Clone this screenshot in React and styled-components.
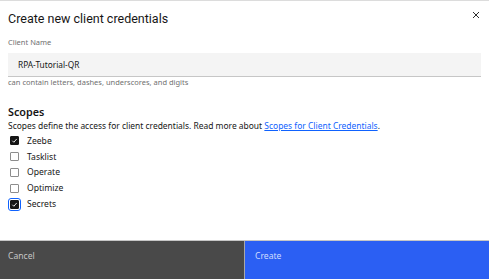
import React from "react";
import styled, { createGlobalStyle } from "styled-components";

const GlobalStyle = createGlobalStyle`
    html, body {
        margin: 0;
        padding: 0;
        background: #ffffff;
    }
    body {
        font-family: "Noto Sans", "Open Sans", sans-serif;
        color: #161616;
    }
`;

const Modal = styled.div`
    width: 489px;
    height: 279px;
    box-sizing: border-box;
    border-top: 1px solid #dcdcdc;
    display: flex;
    flex-direction: column;
    background: #ffffff;
`;

const Body = styled.div`
    flex: 1;
    padding: 0 8px 0 8px;
    display: flex;
    flex-direction: column;
`;

const Header = styled.div`
    display: flex;
    justify-content: space-between;
    align-items: flex-start;
    padding-top: 9px;
`;

const Title = styled.h2`
    margin: 0;
    font-family: Roboto, "Noto Sans", sans-serif;
    font-size: 12.5px;
    font-weight: 400;
    line-height: 18px;
    color: #161616;
`;

const Close = styled.button`
    border: none;
    background: none;
    padding: 0;
    margin: 0;
    width: 10px;
    height: 10px;
    display: flex;
    align-items: center;
    justify-content: center;
    cursor: pointer;
`;

const Label = styled.label`
    display: block;
    margin-top: 9px;
    font-size: 7.5px;
    line-height: 10px;
    color: #6f6f6f;
`;

const Input = styled.div`
    margin-top: 6px;
    height: 23px;
    background: #f4f4f4;
    border-bottom: 1px solid #c6c6c6;
    display: flex;
    align-items: center;
    padding-left: 10px;
    font-size: 8.3px;
    color: #161616;
`;

const Helper = styled.div`
    margin-top: 0;
    font-size: 7.5px;
    line-height: 10px;
    color: #6f6f6f;
`;

const SectionTitle = styled.h3`
    margin: 18px 0 0 0;
    font-size: 10.8px;
    font-weight: 600;
    line-height: 13px;
    color: #161616;
`;

const Description = styled.p`
    margin: 2px 0 0 0;
    font-size: 8.45px;
    line-height: 12px;
    color: #161616;

    a {
        color: #0f62fe;
        text-decoration: underline;
    }
`;

const List = styled.div`
    display: flex;
    flex-direction: column;
    margin-top: 1px;
`;

const Row = styled.label`
    display: flex;
    align-items: center;
    height: 15.8px;
    gap: 8px;
    padding-left: 2px;
    font-size: 8.6px;
    color: #161616;
`;

const Box = styled.span`
    width: 9px;
    height: 9px;
    box-sizing: border-box;
    border-radius: 1px;
    display: flex;
    align-items: center;
    justify-content: center;
    background: ${(p) => (p.checked ? "#161616" : "#ffffff")};
    border: 1px solid ${(p) => (p.checked ? "#161616" : "#8d8d8d")};
    outline: ${(p) => (p.focused ? "1.2px solid #0f62fe" : "none")};
    outline-offset: 1px;
`;

const Footer = styled.div`
    display: grid;
    grid-template-columns: 244px 1fr;
    height: 38px;
    border-top: 1px solid #c6c6c6;
`;

const FooterButton = styled.button`
    border: none;
    margin: 0;
    text-align: left;
    align-self: stretch;
    display: flex;
    align-items: flex-start;
    padding: 9px 0 0 8px;
    font-family: inherit;
    font-size: 8.6px;
    color: ${(p) => (p.primary ? "#d0dcff" : "#c6c6c6")};
    background: ${(p) => (p.primary ? "#2b5ff3" : "#494949")};
    border-left: ${(p) => (p.primary ? "1px solid #a8a8a8" : "none")};
    padding-left: ${(p) => (p.primary ? "10px" : "8px")};
`;

const scopes = [
    { name: "Zeebe", checked: true },
    { name: "Tasklist", checked: false },
    { name: "Operate", checked: false },
    { name: "Optimize", checked: false },
    { name: "Secrets", checked: true, focused: true },
];

const Check = () => (
    <svg width="7" height="7" viewBox="0 0 16 16">
        <path d="M3 8.5 L6.5 12 L13 4.5" fill="none" stroke="#ffffff" strokeWidth="2" />
    </svg>
);

export default function App() {
    return (
        <>
            <GlobalStyle />
            <Modal>
                <Body>
                    <Header>
                        <Title>Create new client credentials</Title>
                        <Close aria-label="close">
                            <svg width="8" height="8" viewBox="0 0 16 16">
                                <path d="M2 2 L14 14 M14 2 L2 14" stroke="#161616" strokeWidth="1.8" />
                            </svg>
                        </Close>
                    </Header>
                    <Label>Client Name</Label>
                    <Input>RPA-Tutorial-QR</Input>
                    <Helper>can contain letters, dashes, underscores, and digits</Helper>
                    <SectionTitle>Scopes</SectionTitle>
                    <Description>
                        Scopes define the access for client credentials. Read more about{" "}
                        <a href="#">Scopes for Client Credentials</a>.
                    </Description>
                    <List>
                        {scopes.map((scope) => (
                            <Row key={scope.name}>
                                <Box checked={scope.checked} focused={scope.focused}>
                                    {scope.checked && <Check />}
                                </Box>
                                {scope.name}
                            </Row>
                        ))}
                    </List>
                </Body>
                <Footer>
                    <FooterButton>Cancel</FooterButton>
                    <FooterButton primary>Create</FooterButton>
                </Footer>
            </Modal>
        </>
    );
}
